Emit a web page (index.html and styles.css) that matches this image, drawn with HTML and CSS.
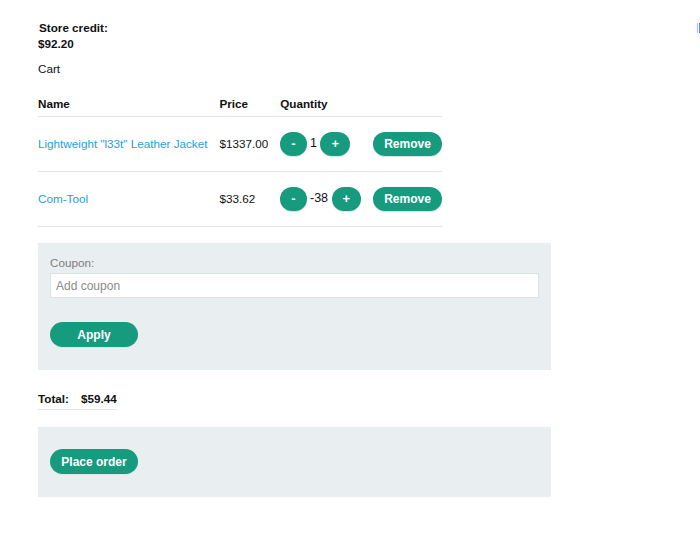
FILE: index.html
```html
<!DOCTYPE html>
<html>
<head>
<meta charset="utf-8">
<link rel="stylesheet" href="styles.css">
</head>
<body>
<div class="page">
  <div class="credit">
    <div class="credit-label">Store credit:</div>
    <div class="credit-value">$92.20</div>
  </div>
  <div class="cart-title">Cart</div>
  <table class="cart">
    <thead>
      <tr><th>Name</th><th>Price</th><th>Quantity</th><th></th></tr>
    </thead>
    <tbody>
      <tr>
        <td><a class="prod" href="#">Lightweight "l33t" Leather Jacket</a></td>
        <td>$1337.00</td>
        <td class="qty"><button class="btn sm">-</button> 1 <button class="btn sm">+</button></td>
        <td class="last"><button class="btn">Remove</button></td>
      </tr>
      <tr>
        <td><a class="prod" href="#">Com-Tool</a></td>
        <td>$33.62</td>
        <td class="qty"><button class="btn sm">-</button> -38 <button class="btn sm">+</button></td>
        <td class="last"><button class="btn">Remove</button></td>
      </tr>
    </tbody>
  </table>
  <div class="panel coupon">
    <label class="coupon-label">Coupon:</label>
    <input class="coupon-input" type="text" placeholder="Add coupon">
    <button class="btn wide">Apply</button>
  </div>
  <table class="total">
    <tr><td>Total:</td><td class="last">$59.44</td></tr>
  </table>
  <div class="panel order">
    <button class="btn wide">Place order</button>
  </div>
</div>
<span class="mark"></span>
</body>
</html>
```
FILE: styles.css
```css
html, body {
  margin: 0;
  padding: 0;
  background: #fff;
}
body {
  font-family: "Liberation Sans", Arial, sans-serif;
  font-size: 11.7px;
  color: #111;
  position: relative;
  min-height: 546px;
}
.page {
  padding: 20px 0 0 38px;
  width: 513px;
}
.credit {
  font-weight: bold;
  line-height: 16px;
}
.credit-label { padding-left: 1px; }
.cart-title {
  margin-top: 9px;
  line-height: 16px;
}
table {
  border-collapse: collapse;
}
.cart {
  margin-top: 19px;
}
.cart th {
  text-align: left;
  font-weight: bold;
  padding: 0 12px 0 0;
  height: 20px;
  vertical-align: top;
  line-height: 16px;
  border-bottom: 1px solid #e4e4e4;
}
.cart td {
  padding: 0 12px 1px 0;
  height: 53px;
  border-bottom: 1px solid #e4e4e4;
  white-space: nowrap;
}
.cart td.qty {
  font-size: 12.5px;
}
.cart td.last, .cart th:last-child { padding-right: 0; }
.prod {
  color: #1ba0e2;
  text-decoration: none;
}
.btn {
  font-family: "Liberation Sans", Arial, sans-serif;
  font-size: 12px;
  font-weight: bold;
  color: #fff;
  background: #169b7e;
  border: none;
  border-radius: 12px;
  height: 24px;
  padding: 0 11px;
  box-shadow: 0 1px 0 #d8e8e3;
  cursor: pointer;
  vertical-align: middle;
  white-space: nowrap;
}
.btn.sm {
  font-size: 13px;
}
.btn.wide {
  min-width: 88px;
  height: 25px;
  border-radius: 13px;
}
.panel {
  background: #e9eef1;
  padding: 12px;
}
.coupon {
  margin-top: 16px;
  padding-bottom: 23px;
}
.coupon-label {
  display: block;
  color: #7d7d7d;
  line-height: 16px;
}
.coupon-input {
  display: block;
  box-sizing: border-box;
  width: 100%;
  height: 25px;
  margin-top: 2px;
  margin-bottom: 24px;
  border: 1px solid #dde1e3;
  background: #fff;
  padding: 0 5px;
  font-family: "Liberation Sans", Arial, sans-serif;
  font-size: 12px;
  outline: none;
}
.coupon-input::placeholder { color: #8a8a8a; }
.total {
  margin-top: 17px;
}
.total td {
  font-weight: bold;
  padding: 4px 12px 0 0;
  height: 18px;
  vertical-align: top;
  line-height: 16px;
  border-bottom: 1px solid #e4e4e4;
}
.total td.last { padding-right: 0; }
.order {
  margin-top: 17px;
  padding-top: 22px;
  padding-bottom: 23px;
}
.mark {
  position: absolute;
  left: 697px;
  top: 23px;
  width: 1px;
  height: 10px;
  border-left: 1px solid #e79be8;
  border-right: 1px solid #2fa0f0;
}
```
